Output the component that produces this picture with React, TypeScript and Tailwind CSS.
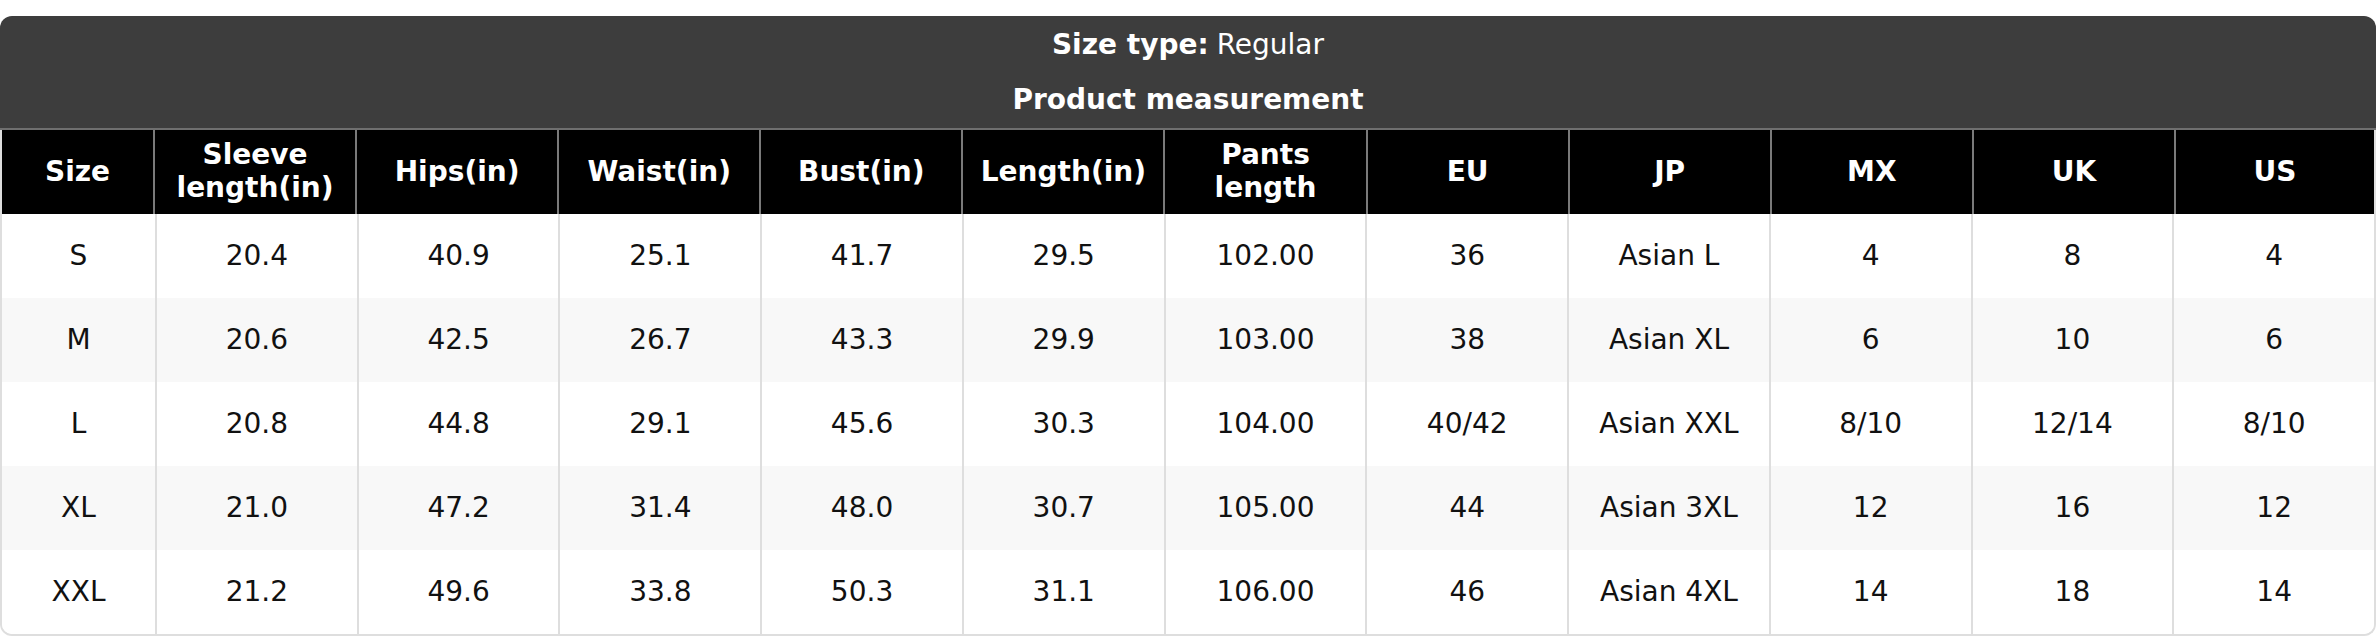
import React from "react";

const headers: React.ReactNode[] = [
  "Size",
  <>Sleeve<br />length(in)</>,
  "Hips(in)",
  "Waist(in)",
  "Bust(in)",
  "Length(in)",
  <>Pants<br />length</>,
  "EU",
  "JP",
  "MX",
  "UK",
  "US",
];

const rows: string[][] = [
  ["S", "20.4", "40.9", "25.1", "41.7", "29.5", "102.00", "36", "Asian L", "4", "8", "4"],
  ["M", "20.6", "42.5", "26.7", "43.3", "29.9", "103.00", "38", "Asian XL", "6", "10", "6"],
  ["L", "20.8", "44.8", "29.1", "45.6", "30.3", "104.00", "40/42", "Asian XXL", "8/10", "12/14", "8/10"],
  ["XL", "21.0", "47.2", "31.4", "48.0", "30.7", "105.00", "44", "Asian 3XL", "12", "16", "12"],
  ["XXL", "21.2", "49.6", "33.8", "50.3", "31.1", "106.00", "46", "Asian 4XL", "14", "18", "14"],
];

export default function App() {
  return (
    <div
      className="w-[2376px] pt-4 bg-white"
      style={{ fontFamily: '"DejaVu Sans", "Liberation Sans", sans-serif' }}
    >
      <div className="rounded-t-[12px] bg-[#3d3d3d] text-white">
        <div className="h-[57px] pt-[1px] flex items-center justify-center text-[28px]">
          <span className="font-bold">Size type:</span>
          <span className="ml-[8px]">Regular</span>
        </div>
        <div className="h-[55px] pb-[1px] flex items-center justify-center text-[28px] font-bold">
          Product measurement
        </div>
      </div>
      <div className="h-[2px] bg-[#6f6f6f]" />
      <div className="border-x-2 border-b-2 border-[#dedede] rounded-b-[12px] overflow-hidden">
        <div className="grid grid-cols-[153px_repeat(11,1fr)] bg-black -mx-[2px]">
          {headers.map((h, i) => (
            <div
              key={i}
              className={`h-[84px] flex items-center justify-center text-center px-[16px] text-white font-bold text-[28px] leading-[1.17] border-l-2 border-[#7a7a7a] ${i === 11 ? "border-r-2" : ""}`}
            >
              {h}
            </div>
          ))}
        </div>
        {rows.map((r, ri) => (
          <div
            key={ri}
            className={`grid grid-cols-[153px_repeat(11,1fr)] ${ri % 2 === 1 ? "bg-[#f8f8f8]" : "bg-white"}`}
          >
            {r.map((c, ci) => (
              <div
                key={ci}
                className={`h-[84px] flex items-center justify-center text-[28px] text-[#111111] ${ci > 0 ? "border-l-2 border-[#dedede]" : ""}`}
              >
                {c}
              </div>
            ))}
          </div>
        ))}
      </div>
    </div>
  );
}
